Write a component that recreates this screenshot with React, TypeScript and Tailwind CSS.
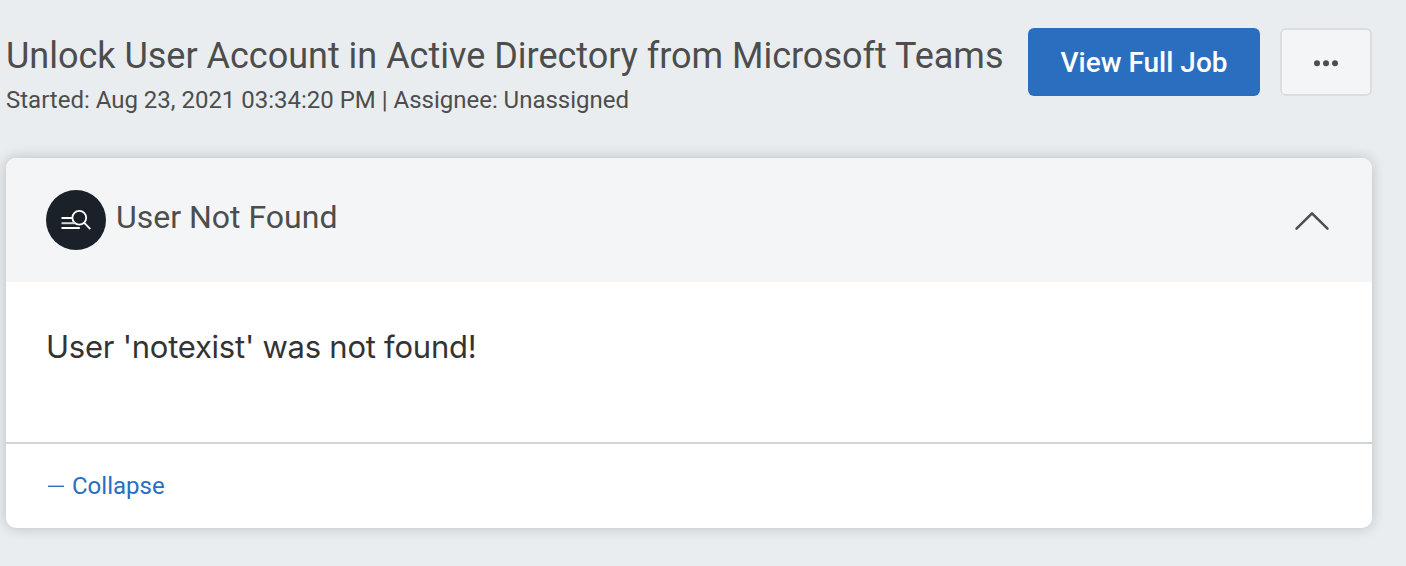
export default function App() {
  return (
    <div className="h-[566px] w-[1406px] overflow-hidden bg-[#e9edf0] pl-[6px] pr-[34px] pt-7 font-['Roboto',sans-serif] text-[#4d4d4d]">
      <header className="flex h-[130px] items-start">
        <div className="flex-1 whitespace-nowrap pt-1">
          <h1 className="text-[36px] leading-[48px] tracking-[-0.01px]">Unlock User Account in Active Directory from Microsoft Teams</h1>
          <p className="text-[24px] leading-[40px] tracking-[-0.01px]">Started: Aug 23, 2021 03:34:20 PM | Assignee: Unassigned</p>
        </div>
        <button className="h-[68px] w-[232px] rounded-md bg-[#2a6ebf] pt-[2px] text-[28px] font-medium text-white">View Full Job</button>
        <button aria-label="More" className="ml-5 flex h-[68px] w-[92px] items-center justify-center rounded-md border-2 border-[#dcddde] bg-[#f4f5f7] pt-[2px]">
          <svg width="26" height="8" viewBox="0 0 26 8" fill="#4d4d4d"><circle cx="4" cy="4.3" r="3" /><circle cx="13" cy="4.3" r="3" /><circle cx="22" cy="4.3" r="3" /></svg>
        </button>
      </header>
      <section className="h-[370px] rounded-[10px] bg-white shadow-[0_0_14px_rgba(0,0,0,0.2)]">
        <div className="flex h-[124px] items-center rounded-t-[10px] bg-[#f4f5f7] pl-10 pr-[42px]">
          <svg width="60" height="60" viewBox="0 0 60 60" fill="none"><circle cx="30" cy="30" r="30" fill="#1b2129" /><g stroke="#fff" strokeWidth="1.8"><circle cx="33.3" cy="27.7" r="6.9" /><path d="M38.3 32.8l6 6.3" /><path d="M15.5 28h10.5M15.5 38h18.3" strokeWidth="2" /><path d="M15.5 33.2h13.8" stroke="#d5d6d7" strokeWidth="2" /></g></svg>
          <h2 className="ml-[10px] flex-1 pb-[6px] text-[32px] leading-[40px]">User Not Found</h2>
          <svg className="mt-[2px]" width="36" height="20" viewBox="0 0 36 20" fill="none" stroke="#4d4d4d" strokeWidth="2.5" strokeLinecap="round" strokeLinejoin="round"><path d="M2.5 17.7L18 2.3L33.5 17.7" /></svg>
        </div>
        <div className="h-[160px] pl-10 pt-[45px] font-['Inter',sans-serif] text-[31px] leading-[40px] tracking-[-0.24px] text-[#333333]">User 'notexist' was not found!</div>
        <div className="flex h-[86px] items-center gap-2 border-t-2 border-[#d0d4d7] pl-[42px] text-[24px] text-[#2a6ebf]"><svg width="16" height="2"><path d="M0 1.3h16" stroke="#2a6ebf" strokeWidth="1.4" /></svg>Collapse</div>
      </section>
    </div>
  );
}
